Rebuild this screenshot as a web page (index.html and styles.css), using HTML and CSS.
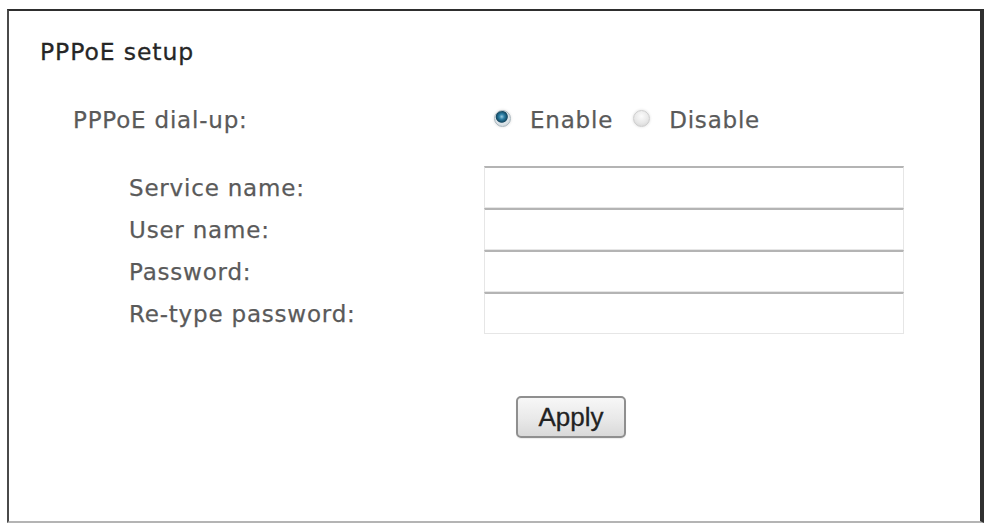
FILE: index.html
```html
<!DOCTYPE html>
<html lang="en">
<head>
<meta charset="utf-8">
<title>PPPoE setup</title>
<link rel="stylesheet" href="styles.css">
</head>
<body>
<section class="frame">
  <h1 class="title">PPPoE setup</h1>
  <div class="dial">
    <span class="dial-label">PPPoE dial-up:</span>
    <div class="radios">
      <label class="opt"><input type="radio" name="dial" checked><span>Enable</span></label>
      <label class="opt"><input type="radio" name="dial"><span>Disable</span></label>
    </div>
  </div>
  <div class="fields">
    <label class="field-label" for="svc">Service name:</label>
    <input class="field-input" id="svc" type="text">
    <label class="field-label" for="usr">User name:</label>
    <input class="field-input" id="usr" type="text">
    <label class="field-label" for="pw">Password:</label>
    <input class="field-input" id="pw" type="password">
    <label class="field-label" for="pw2">Re-type password:</label>
    <input class="field-input" id="pw2" type="password">
  </div>
  <div class="actions">
    <button class="apply" type="button">Apply</button>
  </div>
</section>
</body>
</html>
```
FILE: styles.css
```css
html, body {
  margin: 0;
  padding: 0;
  background: #ffffff;
}

body {
  font-family: "DejaVu Sans", Verdana, sans-serif;
}

.frame {
  box-sizing: border-box;
  margin: 9px 0 0 7px;
  width: 977px;
  height: 514px;
  border-top: 2px solid #2e2e2e;
  border-left: 2px solid #4a4a4a;
  border-right: 4px solid #303030;
  border-bottom: 2px solid #b4b4b4;
  padding: 28px 0 0 31px;
  background: #ffffff;
}

.title {
  margin: 0;
  font-size: 23.5px;
  font-weight: normal;
  line-height: 27px;
  letter-spacing: 0.9px;
  color: #262626;
  -webkit-text-stroke: 0.3px #262626;
}

.dial {
  display: flex;
  align-items: center;
  margin-top: 41px;
  padding-left: 33px;
  height: 27px;
  font-size: 23px;
  letter-spacing: 0.8px;
  color: #5a5a5a;
  -webkit-text-stroke: 0.25px #5a5a5a;
}

.dial-label {
  width: 421px;
  line-height: 27px;
}

.radios {
  display: flex;
  align-items: center;
  gap: 20px;
}

.opt {
  display: flex;
  align-items: center;
  gap: 19px;
  line-height: 27px;
}

.opt input {
  appearance: none;
  -webkit-appearance: none;
  margin: -5px 0 0 0;
  width: 17px;
  height: 17px;
  border-radius: 50%;
  box-sizing: border-box;
  border: 1px solid #cdcdcd;
  background: radial-gradient(circle at 50% 35%, #fbfbfb 0, #e8e8e8 55%, #d0d0d0 100%);
  box-shadow: 0 0 3px rgba(0, 0, 0, 0.14);
}

.opt input:checked {
  border-color: #a9b6bd;
  background:
    radial-gradient(circle at 45% 38%, #9ccbe0 0, #2f82a8 20%, #17536f 40%, #1a4b63 45%, #dfe6ea 52%, #c3ccd2 100%);
}

.fields {
  display: grid;
  grid-template-columns: 355px 420px;
  grid-auto-rows: 42px;
  margin-top: 32px;
  padding-left: 89px;
}

.field-label {
  align-self: center;
  padding-top: 2px;
  font-size: 23px;
  line-height: 27px;
  letter-spacing: 0.8px;
  color: #5a5a5a;
  -webkit-text-stroke: 0.25px #5a5a5a;
}

.field-input {
  box-sizing: border-box;
  width: 420px;
  height: 42px;
  margin: 0;
  padding: 0 6px;
  border: 1px solid #e6e6e6;
  border-top: 2px solid #b4b4b4;
  background: #ffffff;
  font: inherit;
  outline: none;
}

.actions {
  margin-top: 62px;
  padding-left: 476px;
}

.apply {
  box-sizing: border-box;
  width: 110px;
  height: 42px;
  margin: 0;
  padding: 0;
  border: 2px solid #8f8f8f;
  border-radius: 5px;
  background: linear-gradient(#f7f7f7, #e9e9e9 55%, #d9d9d9);
  font-family: "Liberation Sans", Arial, sans-serif;
  font-size: 26px;
  line-height: 36px;
  color: #222222;
  -webkit-text-stroke: 0.3px #222222;
  box-shadow: 0 1px 1px rgba(0, 0, 0, 0.08);
}
```
